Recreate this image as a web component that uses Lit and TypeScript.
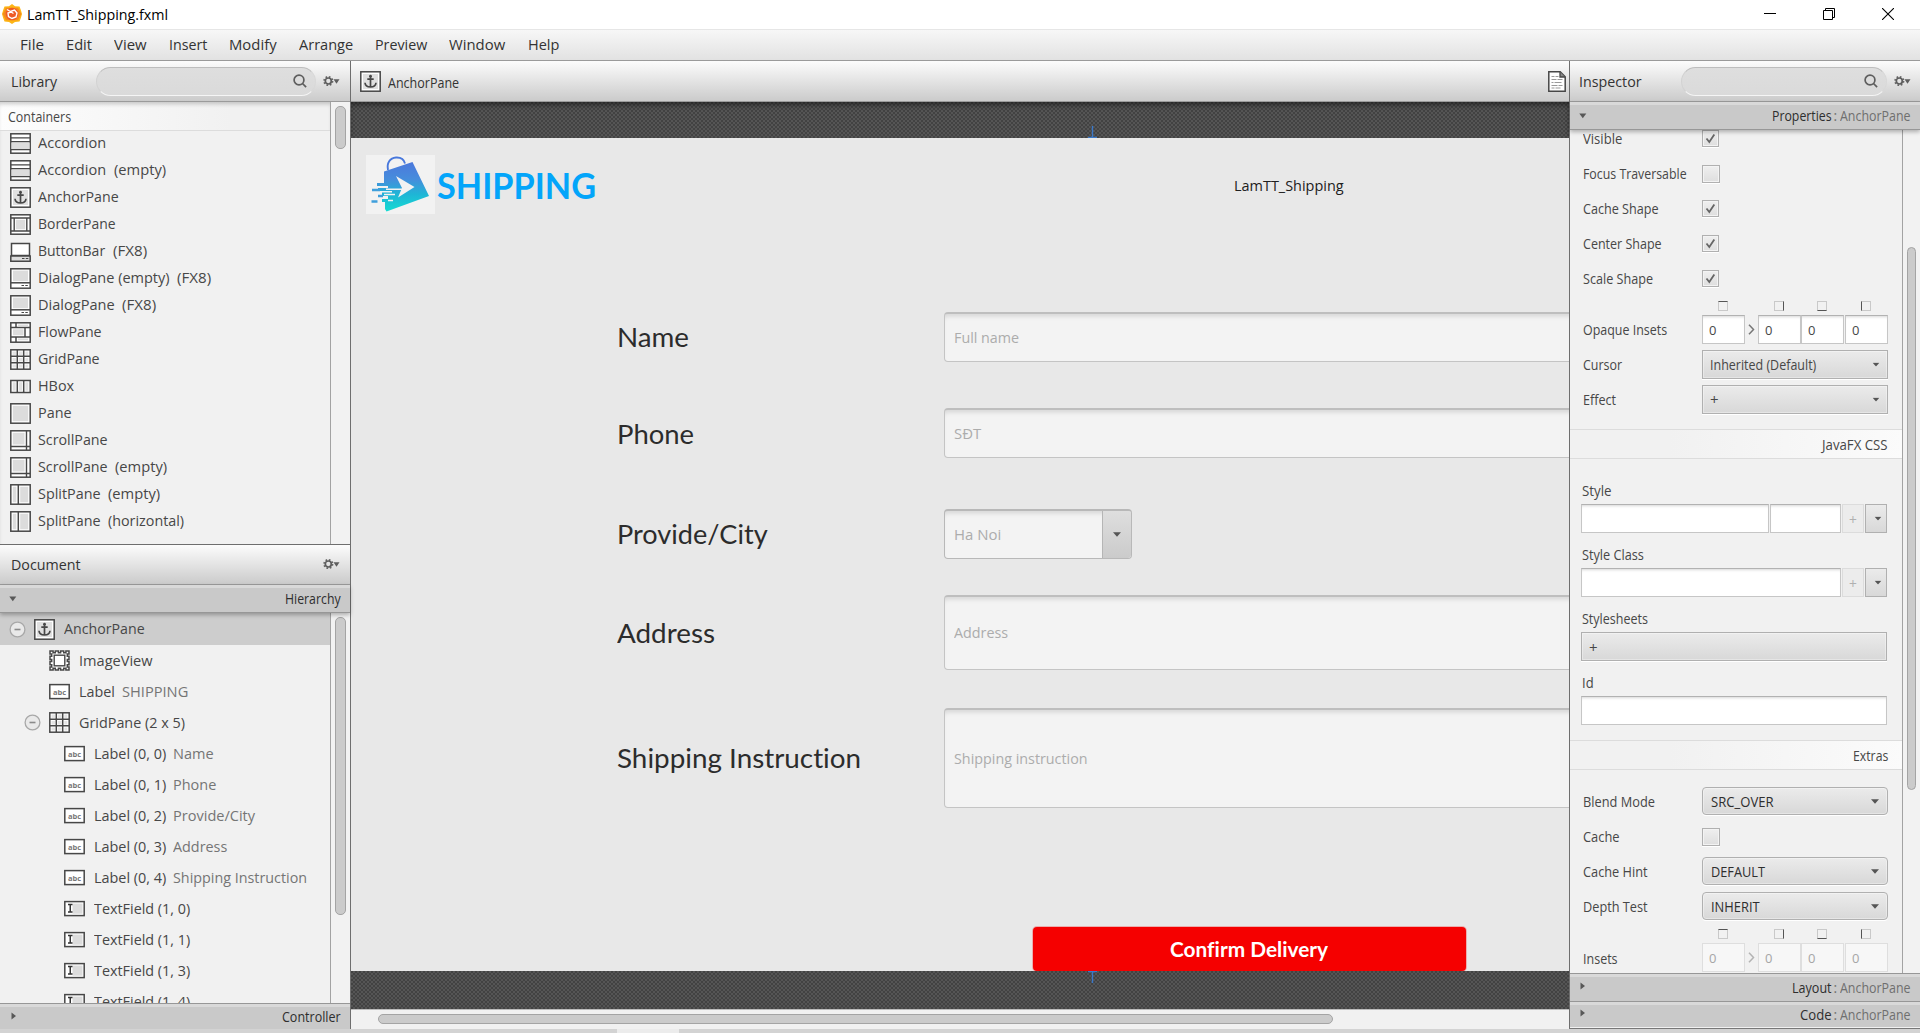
import { LitElement, html, css, svg, nothing } from "lit";
import { customElement, property, query } from "lit/decorators.js";

/** Text squeezed or stretched horizontally to a given width. */
@customElement("fit-text")
class FitText extends LitElement {
  static styles = css`
    :host { display: inline-block; white-space: nowrap; flex: none; font-variant-ligatures: none; }
    .t { display: inline-block; transform-origin: 0 50%; white-space: pre; }
  `;
  @property() text = "";
  @property({ type: Number }) w = 0;
  @query(".t") span!: HTMLElement;
  render() {
    return html`<span class="t">${this.text}</span>`;
  }
  updated() {
    this.span.style.transform = "none";
    const natural = this.span.getBoundingClientRect().width;
    const target = this.w + 1.6;
    this.style.width = `${target}px`;
    this.span.style.transform = `scaleX(${target / natural})`;
  }
}

const t = (text: string, w: number, cls = "") =>
  html`<fit-text class=${cls} .text=${text} .w=${w}></fit-text>`;

const D = "#474747";
const frame = svg`<rect x=".8" y=".8" width="19.4" height="19.4" fill="#fff" stroke=${D} stroke-width="1.5"/>`;
const abcFrame = svg`<rect x=".8" y="3.6" width="19.4" height="14" fill="#fff" stroke=${D} stroke-width="1.5"/>`;

const glyphs: Record<string, unknown> = {
  accordion: svg`${frame}<path d="M1.5 9.5h18v6.5h-18z" fill="#dcdcdc"/><path d="M1 4.8h19M1 8.6h19M1 16.6h19" stroke=${D} stroke-width="1.3"/>`,
  anchor: svg`${frame}<rect x="3" y="3" width="15" height="15" fill="#e0e0e0"/><circle cx="10.5" cy="5.2" r="1.4" fill=${D}/><path d="M10.5 5v11M7.3 8.2h6.4M5 11.8c.2 2.6 2.4 4.2 5.5 4.2s5.3-1.6 5.5-4.2" fill="none" stroke=${D} stroke-width="1.7"/>`,
  border: svg`${frame}<rect x="5.8" y="5.8" width="9.4" height="9.4" fill="#dcdcdc"/><path d="M1 4h19M1 17h19M4.2 4v13M16.8 4v13" stroke=${D} stroke-width="1.4"/>`,
  buttonbar: svg`<path d="M1.5 14.5h18V2.5h-18z" fill="#fff" stroke=${D} stroke-width="1.5"/><path d="M.8 15h19.4v5.2H.8z" fill="#dcdcdc" stroke=${D} stroke-width="1.5"/><path d="M12 17.500h2.500M15.800 17.500h2.500" stroke=${D} stroke-width="1.2"/>`,
  dialog: svg`${frame}<rect x="3" y="2.6" width="15" height="10.6" fill="#dcdcdc"/><path d="M1 14.8h19" stroke=${D} stroke-width="1.5"/><path d="M11.500 17.500h2.500M15.300 17.500h2.500" stroke=${D} stroke-width="1"/>`,
  flow: svg`${frame}<path d="M3 7.3h10.5v6H3zM8 2.5h10v1.5H8zM8 16.5h10v1.7H8z" fill="#dcdcdc"/><path d="M1 5.5h19M1 15h19M6 1v4.5M15 5.5V15M6 15v5" stroke=${D} stroke-width="1.5"/>`,
  grid: svg`${frame}<path d="M2.5 2.5h3.5v3.5H2.5zM9 2.5h3.5v3.5H9zM15.3 2.5h3v3.5h-3zM2.5 9h3.5v3.5H2.5zM9 9h3.5v3.5H9zM15.3 9h3v3.5h-3zM2.5 15.5h3.5v3H2.5zM9 15.5h3.5v3H9zM15.3 15.5h3v3h-3z" fill="#e4e4e4"/><path d="M7.3 1v19M13.7 1v19M1 7.3h19M1 13.7h19" stroke=${D} stroke-width="1.5"/>`,
  hbox: svg`<rect x=".8" y="4.500" width="19.4" height="12" fill="#fff" stroke=${D} stroke-width="1.5"/><path d="M2.7 6.3h3v8.5h-3zM9 6.3h3v8.5H9zM15.3 6.3h3v8.5h-3z" fill="#e0e0e0"/><path d="M7.3 4.5v12M13.7 4.5v12" stroke=${D} stroke-width="1.5"/>`,
  pane: svg`${frame}<rect x="2.8" y="2.8" width="15.4" height="15.4" fill="#dcdcdc"/>`,
  scroll: svg`${frame}<rect x="2.8" y="2.8" width="11.7" height="11.7" fill="#dcdcdc"/><path d="M16.5 1v19M1 16.5h19" stroke=${D} stroke-width="1.4"/>`,
  split: svg`${frame}<path d="M2.8 2.8h3.5v15.4H2.8zM10.2 2.8h8v15.4h-8z" fill="#dcdcdc"/><path d="M8.3 1v19" stroke=${D} stroke-width="1.5"/>`,
  image: svg`<path d="M1 1h3.1v1.700h2.200V1h3.100v1.700h2.200V1h3.100v1.700h2.200V1H20v3.100h-1.700v2.200H20v3.100h-1.700v2.200H20v3.100h-1.700v2.200H20V20h-3.100v-1.700h-2.200V20h-3.100v-1.700H9.400V20H6.300v-1.700H4.100V20H1v-3.100h1.700v-2.200H1v-3.100h1.700V9.400H1V6.300h1.700V4.100H1z" fill="#fff" stroke=${D} stroke-width="1.5"/><rect x="5.2" y="5.2" width="10.6" height="10.6" fill="#fff" stroke=${D} stroke-width="1.4"/>`,
  label: svg`${abcFrame}<text x="10.5" y="13.6" class="abc" text-anchor="middle">abc</text>`,
  field: svg`${abcFrame}<path d="M8.5 5.5h10v10.2h-10z" fill="#dcdcdc"/><path d="M4 6.6h4.500M4 14h4.500M6.250 6.600V14" stroke="#333" stroke-width="1.5"/>`,
};
const icon = (n: string) => html`<svg class="ico" width="21" height="21" viewBox="0 0 21 21">${glyphs[n]}</svg>`;

const search = html`<div class="search"><svg width="14" height="14" viewBox="0 0 14 14" fill="none" stroke="#5e5e5e" stroke-width="1.7"><circle cx="6" cy="6" r="4.9"/><path d="M9.5 9.5l3.6 3.7"/></svg></div>`;
const gear = html`<svg class="gear" width="17" height="12" viewBox="0 0 17 12"><circle cx="5.3" cy="6" r="4.2" fill="none" stroke="#666" stroke-width="1.8" stroke-dasharray="1.65 1.65"/><circle cx="5.3" cy="6" r="3" fill="none" stroke="#5e5e5e" stroke-width="1.7"/><path d="M10.5 4.2h6l-3 4.6z" fill="#5e5e5e"/></svg>`;
const down = html`<svg width="8" height="6" viewBox="0 0 8 6"><path d="M.3.5h7L3.8 5.3z" fill="#585858"/></svg>`;
const right = html`<svg class="tri" width="6" height="8" viewBox="0 0 6 8"><path d="M.5.5v7L5 4z" fill="#585858"/></svg>`;
const arrow = html`<svg class="arrow" width="8" height="5" viewBox="0 0 8 5"><path d="M0 .3h8L4 4.8z" fill="#555"/></svg>`;

const menus: [string, number][] = [["File", 22.4], ["Edit", 24.4], ["View", 31], ["Insert", 36.8], ["Modify", 46], ["Arrange", 52.6], ["Preview", 50.6], ["Window", 54.6], ["Help", 29.8]];

const library: [string, string, number, string?, number?][] = [
  ["accordion", "Accordion", 66.5],
  ["accordion", "Accordion", 66.5, "(empty)", 50.5],
  ["anchor", "AnchorPane", 79],
  ["border", "BorderPane", 76],
  ["buttonbar", "ButtonBar", 65.5, "(FX8)", 32.5],
  ["dialog", "DialogPane (empty)", 130, "(FX8)", 32.5],
  ["dialog", "DialogPane", 75, "(FX8)", 32.5],
  ["flow", "FlowPane", 62],
  ["grid", "GridPane", 60],
  ["hbox", "HBox", 34.5],
  ["pane", "Pane", 32],
  ["scroll", "ScrollPane", 68],
  ["scroll", "ScrollPane", 68, "(empty)", 50.5],
  ["split", "SplitPane", 61, "(empty)", 50.5],
  ["split", "SplitPane", 61, "(horizontal)", 74.5],
];

const tree: [number, string, string, number, string?, number?][] = [
  [0, "anchor", "AnchorPane", 79],
  [1, "image", "ImageView", 72],
  [1, "label", "Label", 34.3, "SHIPPING", 64.7],
  [1, "grid", "GridPane (2 x 5)", 104.3],
  [2, "label", "Label (0, 0)", 70.7, "Name", 39],
  [2, "label", "Label (0, 1)", 70.7, "Phone", 41.7],
  [2, "label", "Label (0, 2)", 70.7, "Provide/City", 80.5],
  [2, "label", "Label (0, 3)", 70.7, "Address", 52.7],
  [2, "label", "Label (0, 4)", 70.7, "Shipping Instruction", 132.5],
  [2, "field", "TextField (1, 0)", 94.6],
  [2, "field", "TextField (1, 1)", 94.6],
  [2, "field", "TextField (1, 3)", 94.6],
  [2, "field", "TextField (1, 4)", 94.6],
];

const form: [string, string, number, string, number][] = [
  ["name", "Name", 70.4, "Full name", 63.5],
  ["phone", "Phone", 75.5, "SĐT", 25.6],
  ["city", "Provide/City", 149, "Ha Noi", 45.6],
  ["address", "Address", 96.4, "Address", 52.5],
  ["instr", "Shipping Instruction", 242.5, "Shipping instruction", 132],
];

const minus = html`<svg class="minus" width="17" height="17" viewBox="0 0 17 17"><circle cx="8.5" cy="8.5" r="7.4" fill="#e9e9e9" stroke="#a8a8a8" stroke-width="1.3"/><path d="M5.5 8.5h6" stroke="#8a8a8a" stroke-width="1.6"/></svg>`;

@customElement("app-root")
class AppRoot extends LitElement {
  static styles = css`
    :host { display: block; width: 1920px; height: 1033px; overflow: hidden; font: 15px "Open Sans", "Noto Sans", sans-serif; color: #474747; background: #f1f1f1; }
    * { box-sizing: border-box; }
    svg { display: block; flex: none; }
    .app { display: flex; flex-direction: column; height: 1033px; }
    .title { height: 29px; flex: none; background: #fff; display: flex; align-items: center; padding: 0 26px 1px 1px; color: #000; gap: 4px; }
    .title .controls { margin-left: auto; display: flex; gap: 47px; }
    .menu { height: 32px; flex: none; border-top: 1px solid #e6e6e6; border-bottom: 1px solid #9a9a9a; background: linear-gradient(#f7f7f7, #e2e2e2); display: flex; align-items: center; padding: 0 0 2px 19.7px; gap: 22.1px; color: #333; }
    .main { display: flex; height: 968px; flex: none; }
    .left { width: 351px; border-right: 1px solid #6e6e6e; display: flex; flex-direction: column; flex: none; }
    .center { width: 1218px; flex: none; display: flex; flex-direction: column; overflow: hidden; }
    .right { width: 351px; border-left: 1px solid #6e6e6e; border-bottom: 1px solid #777; display: flex; flex-direction: column; flex: none; }
    .head { height: 41px; flex: none; background: linear-gradient(#fcfcfc, #cbcbcb); border-bottom: 1px solid #9b9b9b; display: flex; align-items: center; padding: 0 10px 0 10.7px; color: #333; }
    .search { height: 29px; width: 220px; margin-left: auto; border-radius: 15px; border: 1.5px solid #c2c2c2; border-top-color: #bdbdbd; border-bottom-color: #f5f5f5; border-left-color: #d2d2d2; border-right-color: #d8d8d8; background: linear-gradient(#dedede, #dadada); display: flex; align-items: center; justify-content: flex-end; padding-right: 8px; }
    .gear { margin-left: 7px; }
    .bar { height: 28px; flex: none; background: #c9c9c9; border-bottom: 1px solid #979797; display: flex; align-items: center; padding: 0 9px; font-size: 13.75px; color: #2e2e2e; box-shadow: inset 0 3px 0 #d9d9d9; justify-content: space-between; }
    .bar .txt { display: flex; }
    .bar .txt .sub { color: #6f6f6f; }
    .bar .colon { width: 9px; padding-left: 2px; color: #6f6f6f; }
    .bar.open { box-shadow: inset 0 3px 0 #d9d9d9, 0 2px 4px rgba(0,0,0,.28); z-index: 1; position: relative; }
    .scrollwrap { display: flex; overflow: hidden; }
    .list { width: 331px; border-right: 1px solid #a3a3a3; flex: none; overflow: hidden; }
    .vbar { flex: 1; padding-left: 4px; background: #f2f2f2; }
    .thumb { width: 11px; border-radius: 5px; background: #cbcbcb; border: 1.5px solid #a4a4a4; }
    .libbody { height: 442px; flex: none; box-shadow: inset 0 4px 4px -2px rgba(0,0,0,.25); }
    .libbody .thumb { margin-top: 4px; height: 43px; }
    .cat { height: 29px; border-bottom: 1px solid #dcdcdc; background: linear-gradient(90deg, #fdfdfd, #f1f1f1 70%); padding: 0 0 0 7.7px; font-size: 13.75px; display: flex; align-items: center; box-shadow: inset 0 4px 4px -2px rgba(0,0,0,.2); }
    .items { margin-top: -1px; }
    .item { height: 27px; display: flex; align-items: center; padding-left: 10px; }
    .item .txt { display: flex; gap: 8px; margin-left: 6.5px; padding-bottom: 3px; }
    .doc { border-top: 1px solid #6e6e6e; padding-bottom: 2px; }
    .treebody { height: 390px; flex: none; }
    .treebody .thumb { margin-top: 4px; height: 298px; }
    .node { height: 31px; display: flex; align-items: center; }
    .node.sel { height: 32px; background: #cdcdcd; }
    .node .lead { width: 34px; display: flex; padding-left: 9px; flex: none; }
    .node.d1 .lead { width: 49px; padding-left: 24px; }
    .node.d2 .lead { width: 64px; }
    .node .txt { display: flex; gap: 7.5px; margin-left: 8.5px; padding-bottom: 1px; }
    .node.sel .txt { padding-bottom: 3px; }
    .sub { color: #757575; }
    .abc { font: bold 7.5px "Open Sans", sans-serif; fill: #777; }
    .ctrl { border-top: 1px solid #979797; border-bottom: 1px solid #b5b5b5; height: 27px; padding-left: 11px; }
    .ctrl .tri { margin-bottom: 2px; }
    .chead { padding: 0 3px 0 9px; font-size: 13.75px; }
    .chead .name { margin-left: 7px; padding-top: 3px; }
    .chead .page { margin-left: auto; }
    .dark { background-color: #555; background-image: radial-gradient(circle at 1px 1px, #424242 0 .9px, transparent 1px), radial-gradient(circle at 3px 3px, #424242 0 .9px, transparent 1px); background-size: 4px 4px; flex: none; position: relative; }
    .dark.top { height: 36px; box-shadow: inset 0 4px 5px -1px rgba(0,0,0,.45); }
    .dark.bot { height: 38px; }
    .pin { position: absolute; left: 737px; }
    .pin.a { bottom: 0; } .pin.b { top: 0; }
    .canvas { height: 833px; flex: none; background: #e8e8e8; overflow: hidden; }
    .brand { display: flex; align-items: center; padding: 17px 0 0 15px; height: 76px; }
    .logo { background: #f2f2f2; }
    .brandname { font: bold 35.4px Lato, sans-serif; color: #03a5fa; margin-left: 2px; padding-top: 1px; }
    .who { margin-left: 637.5px; color: #202020; }
    .form { padding-left: 265.500px; margin-top: 98px; }
    .row { display: grid; grid-template-columns: 327.500px 660px; align-items: center; height: 50px; }
    .row .lab { font: 26.5px Lato, sans-serif; color: #2c2c2c; }
    .row .box { height: 100%; border: 1px solid #c4c4c4; border-top: 2px solid #bebebe; border-radius: 4px; background: #f3f3f3; box-shadow: inset 0 5px 5px -3px rgba(0,0,0,.13); color: #acacac; display: flex; align-items: center; padding-left: 8.5px; }
    .row .box > fit-text { margin-bottom: 2px; }
    .row.phone { margin-top: 46px; }
    .row.phone .lab { padding-top: 2px; }
    .row.city { margin-top: 51px; }
    .row.city .box { width: 188px; justify-content: space-between; border-color: #b8b8b8; overflow: hidden; }
    .pick { width: 29px; height: 100%; border-left: 1px solid #b5b5b5; background: linear-gradient(#dedede, #cbcbcb); display: flex; align-items: center; justify-content: center; }
    .row.address { height: 75px; margin-top: 36px; }
    .row.instr { height: 100px; margin-top: 38px; }
    .confirm { width: 433px; height: 44px; margin: 119px 0 0 682px; border-radius: 4px; background: #f50000; box-shadow: 0 0 0 1px rgba(245,0,0,.25); display: flex; align-items: center; justify-content: center; color: #fff; font: bold 20px Lato, sans-serif; }
    .hbar { height: 20px; flex: none; border-top: 1px solid #bdbdbd; background: #f1f1f1; padding: 4px 0 0 27px; }
    .hbar .thumb { width: 955px; height: 10px; }
    .ihead { padding: 0 9px 0 8.700px; }
    .ihead .search { width: 206px; }
    .ibody { height: 843px; flex: none; }
    .ibody .list { width: 333px; }
    .ibody .thumb { width: 9px; height: 543px; margin-top: 117px; }
    .props { font-size: 13.75px; margin-top: -9px; }
    .p { height: 35px; display: flex; align-items: center; padding-left: 12.6px; }
    .p > .k { width: 119.4px; padding-bottom: 1px; flex: none; }
    .p.tall { height: 51px; align-items: flex-start; }
    .p.tall > .k { padding-top: 24px; }
    .p.low { margin-top: 0; }
    .p.low > .k { padding-top: 25px; }
    .chk { width: 17px; height: 17px; border: 1px solid #b0b0b0; background: linear-gradient(#efefef, #dedede); box-shadow: inset 0 0 0 1px #f3f3f3, 0 1px 0 #fff; display: grid; place-items: center; }
    .chk.off { width: 18px; height: 18px; }
    .combo { width: 186px; height: 29px; border: 1px solid #b0b0b0; background: linear-gradient(#ebebeb, #d8d8d8); box-shadow: inset 0 0 0 1px rgba(255,255,255,.35), 0 1px 0 #fff; display: flex; align-items: center; justify-content: space-between; padding: 0 7px; }
    .combo.round { border-radius: 4px; height: 28px; color: #2e2e2e; padding: 0 8px; margin-bottom: 1px; }
    .insets { display: grid; grid-template-columns: 43px 13px 43px 44px 43px; width: 186px; padding-top: 5px; row-gap: 4px; }
    .insets .mini { width: 10px; height: 10px; border: 1px solid #c9c9c9; margin-left: 16px; }
    .mini.m0 { border-top-color: #555; } .mini.m1 { border-right-color: #555; } .mini.m2 { border-bottom-color: #555; } .mini.m3 { border-left-color: #555; }
    .tf { height: 29px; background: #fff; border: 1px solid #c6c6c6; border-top-color: #b2b2b2; box-shadow: inset 0 3px 3px -2px rgba(0,0,0,.16); display: flex; align-items: center; padding: 1px 0 0 6px; }
    .insets .tf { width: 43px; font-size: 13px; }
    .insets.off .tf { background: #f7f7f7; border-color: #dedede; color: #a6a6a6; box-shadow: none; }
    .gt { align-self: center; margin-left: 3px; }
    .insets.off .gt { opacity: .5; }
    .strip { height: 30px; border-top: 1px solid #dcdcdc; border-bottom: 1px solid #dcdcdc; background: linear-gradient(90deg, #f1f1f1 30%, #fbfbfb); display: flex; align-items: center; justify-content: flex-end; padding: 1px 14px 0 0; }
    .s1 { margin-top: 12px; } .s2 { margin-top: 15px; margin-bottom: 14px; }
    .g { padding: 0 15px 0 11px; margin-top: 11px; }
    .g.first { margin-top: 21px; }
    .g .k { height: 20px; line-height: 21px; margin-bottom: 4px; display: block; padding-left: .5px; }
    .fl { display: flex; gap: 1px; }
    .grow { flex: 1; }
    .w71 { width: 71px; }
    .pl { width: 22px; height: 29px; border: 1px solid #dcdcdc; background: #ececec; color: #b0b0b0; display: grid; place-items: center; padding-top: 2px; }
    .dn { width: 22px; height: 29px; border: 1px solid #b0b0b0; background: linear-gradient(#ebebeb, #d8d8d8); display: grid; place-items: center; padding-left: 3px; }
    .dn .arrow, .sm .arrow { transform: scale(.85); }
    .wide { width: auto; justify-content: flex-start; padding-left: 7px; padding-top: 2px; }
    .b1 { border-top: 1px solid #979797; border-bottom: none; height: 28px; }
    .b2 { height: 26px; }
    .b2, .b1 { padding-left: 10px; }
    .b1 .tri { margin-bottom: 3px; }
    .foot { flex: 1; background: #d3d3d3; display: flex; padding-left: 617px; }
    .foot .tab { width: 62px; background: #ececec; }
  `;

  private combo(label: string, w: number, value: string, vw: number, cls: string) {
    return html`<div class="p"><div class="k">${t(label, w)}</div><div class="combo ${cls}">${t(value, vw)}${arrow}</div></div>`;
  }
  private check(label: string, w: number, on: boolean) {
    return html`<div class="p"><div class="k">${t(label, w)}</div><div class="chk ${on ? "" : "off"}">${on
      ? html`<svg width="11" height="11" viewBox="0 0 11 11"><path d="M1.5 5.5l2.8 3.5L9.3 1.5" fill="none" stroke="#666" stroke-width="1.8"/></svg>` : nothing}</div></div>`;
  }
  private insets(label: string, w: number, off: boolean) {
    const gt = html`<svg class="gt" width="7" height="11" viewBox="0 0 7 11"><path d="M1 .8l4.5 4.7L1 10.2" fill="none" stroke="#777" stroke-width="1.5"/></svg>`;
    return html`<div class="p tall ${off ? "low" : ""}"><div class="k">${t(label, w)}</div><div class="insets ${off ? "off" : ""}">
      <div class="mini m0"></div><div></div><div class="mini m1"></div><div class="mini m2"></div><div class="mini m3"></div>
      <div class="tf">0</div>${gt}<div class="tf">0</div><div class="tf">0</div><div class="tf">0</div></div></div>`;
  }
  private bar(cls: string, tri: unknown, name: string, w: number) {
    return html`<div class="bar ${cls}">${tri}<div class="txt">${t(name, w)}<span class="colon">:</span>${t("AnchorPane", 69, "sub")}</div></div>`;
  }

  render() {
    return html`<div class="app">
      <div class="title">
        <svg width="22" height="22" viewBox="0 0 22 22"><path d="M11 1l3 2.2 4.5.3 1.5 4L21 11l-1 3.5-1.5 4-4.500.6L11 21l-3-1.9-4.500-.6-1.500-4L1 11l1-3.500 1.500-4L8 3.200z" fill="#fdb515"/><path d="M5 4.800h12l3.300 6.200-3.300 6.200H5L1.700 11z" fill="#f58a1d"/><circle cx="11" cy="11" r="6.300" fill="#ee5a24"/><path d="M6 6.500l3.500 2 4-1.500 2.500 3-1 4-4 1.500-3.500-2-.5-3.500 3-1 2.500 1.500" fill="none" stroke="#fff" stroke-width="1.4"/></svg>
        ${t("LamTT_Shipping.fxml", 139.5)}
        <div class="controls">
          <svg width="12" height="12" viewBox="0 0 12 12"><path d="M0 5.500h12" stroke="#000"/></svg>
          <svg width="12" height="12" viewBox="0 0 12 12" fill="none" stroke="#000"><path d="M.5 2.500h9v9h-9zM2.500 2.500v-2h9v9h-2"/></svg>
          <svg width="12" height="12" viewBox="0 0 12 12"><path d="M0 0l12 12M12 0L0 12" stroke="#000" stroke-width="1.1"/></svg>
        </div>
      </div>
      <div class="menu">${menus.map(([m, w]) => t(m, w))}</div>
      <div class="main">
        <div class="left">
          <div class="head">${t("Library", 44.5)}${search}${gear}</div>
          <div class="scrollwrap libbody">
            <div class="list">
              <div class="cat">${t("Containers", 61.5)}</div>
              <div class="items">
                ${library.map(([i, a, w, b, bw]) => html`<div class="item">${icon(i)}<div class="txt">${t(a, w)}${b ? t(b, bw!) : nothing}</div></div>`)}
              </div>
            </div>
            <div class="vbar"><div class="thumb"></div></div>
          </div>
          <div class="head doc">${t("Document", 68)}<span class="grow"></span>${gear}</div>
          <div class="bar open">${down}${t("Hierarchy", 54)}</div>
          <div class="scrollwrap treebody">
            <div class="list">
              ${tree.map(([d, i, a, w, b, bw]) => html`<div class="node d${d} ${d === 0 ? "sel" : ""}">
                <div class="lead">${i === "grid" || d === 0 ? minus : nothing}</div>${icon(i)}
                <div class="txt">${t(a, w)}${b ? t(b, bw!, "sub") : nothing}</div></div>`)}
            </div>
            <div class="vbar"><div class="thumb"></div></div>
          </div>
          <div class="bar ctrl">${right}${t("Controller", 57)}</div>
        </div>
        <div class="center">
          <div class="head chead">${icon("anchor")}${t("AnchorPane", 69.5, "name")}
            <svg class="page" width="18" height="21" viewBox="0 0 18 21"><path d="M.8.8h11.4l5 5v14.4H.8z" fill="#fff" stroke="#474747" stroke-width="1.5"/><path d="M12 1v5h5" fill="#888" stroke="#474747" stroke-width="1.3"/><path d="M3.5 5.5h3M7.5 5.5h3M3.5 8.5h5M9.5 8.5h5M3.5 11.5h2M6.5 11.5h7M3.5 14.5h6M10.5 14.5h4M3.5 17h3M7.5 17h5" stroke="#999" stroke-width="1"/></svg>
          </div>
          <div class="dark top"><svg class="pin a" width="9" height="12"><path d="M4.5 0v11M0 11.5h9" stroke="#3a78c8" stroke-width="1.4"/></svg></div>
          <div class="canvas">
            <div class="brand">
              <svg class="logo" width="69" height="59" viewBox="0 0 69 59">
                <defs><linearGradient id="bag" x1="0" y1="0" x2="0" y2="1"><stop offset="0" stop-color="#4c78dc"/><stop offset=".35" stop-color="#468ddc"/><stop offset=".65" stop-color="#1fb5d6"/><stop offset="1" stop-color="#14dcd2"/></linearGradient></defs>
                <path d="M22 15c-1.5-7 2-12 8-12.5 5-.3 8 2 9 6" fill="none" stroke="#4878dc" stroke-width="1.9"/>
                <path d="M18 16.5L46.5 7 63 41 20.5 56.5 19 54v-7h-3v-3h6v-3h-6v-3.5h10V36H12v-3h10v-2H11v-3h7z" fill="url(#bag)"/>
                <path d="M30 21l18.5 11L32 42.5l4-9.5z" fill="#f2f2f2"/>
                <path d="M20 34.2h17M18 39.5h11M22 45.5h5" stroke="#f2f2f2" stroke-width="1.6"/>
                <path d="M6 35h8M12 41h5M5.5 46.5h6" stroke="#3f9fdc" stroke-width="2.6"/>
              </svg>
              ${t("SHIPPING", 157.5, "brandname")}
              ${t("LamTT_Shipping", 108, "who")}
            </div>
            <div class="form">
              ${form.map(([id, l, w, ph, pw]) => html`<div class="row ${id}"><div class="lab">${t(l, w)}</div>
                <div class="box">${t(ph, pw)}${id === "city" ? html`<div class="pick">${arrow}</div>` : nothing}</div></div>`)}
            </div>
            <div class="confirm">${t("Confirm Delivery", 156.5)}</div>
          </div>
          <div class="dark bot"><svg class="pin b" width="9" height="12"><path d="M4.5 0v12M0 .5h9" stroke="#3a78c8" stroke-width="1.4"/></svg></div>
          <div class="hbar"><div class="thumb"></div></div>
        </div>
        <div class="right">
          <div class="head ihead">${t("Inspector", 61)}${search}${gear}</div>
          ${this.bar("open", down, "Properties", 58)}
          <div class="scrollwrap ibody">
            <div class="list"><div class="props">
              ${this.check("Visible", 37.7, true)}
              ${this.check("Focus Traversable", 102, false)}
              ${this.check("Cache Shape", 74, true)}
              ${this.check("Center Shape", 77, true)}
              ${this.check("Scale Shape", 68.5, true)}
              ${this.insets("Opaque Insets", 82.5, false)}
              ${this.combo("Cursor", 37.5, "Inherited (Default)", 104.7, "sm")}
              ${this.combo("Effect", 31.5, "+", 7, "sm")}
              <div class="strip s1">${t("JavaFX CSS", 64)}</div>
              <div class="g first"><div class="k">${t("Style", 28)}</div>
                <div class="fl"><div class="tf grow"></div><div class="tf w71"></div><div class="pl">+</div><div class="dn">${arrow}</div></div></div>
              <div class="g"><div class="k">${t("Style Class", 60.3)}</div>
                <div class="fl"><div class="tf grow"></div><div class="pl">+</div><div class="dn">${arrow}</div></div></div>
              <div class="g"><div class="k">${t("Stylesheets", 64.3)}</div><div class="combo wide">${t("+", 7)}</div></div>
              <div class="g"><div class="k">${t("Id", 10)}</div><div class="tf"></div></div>
              <div class="strip s2">${t("Extras", 33.7)}</div>
              ${this.combo("Blend Mode", 70.3, "SRC_OVER", 61, "round")}
              ${this.check("Cache", 35, false)}
              ${this.combo("Cache Hint", 63, "DEFAULT", 52.3, "round")}
              ${this.combo("Depth Test", 63, "INHERIT", 47, "round")}
              ${this.insets("Insets", 33, true)}
            </div></div>
            <div class="vbar"><div class="thumb"></div></div>
          </div>
          ${this.bar("b1", right, "Layout", 38)}
          ${this.bar("b1 b2", right, "Code", 30)}
        </div>
      </div>
      <div class="foot"><div class="tab"></div></div>
    </div>`;
  }
}
